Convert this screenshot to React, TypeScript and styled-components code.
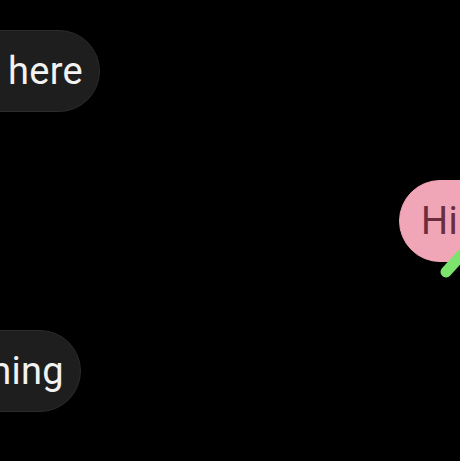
import React from "react";
import styled, { createGlobalStyle } from "styled-components";

const Global = createGlobalStyle`
  html, body { margin: 0; padding: 0; background: #000; }
  body { font-family: Roboto, "Open Sans", sans-serif; }
`;

const Screen = styled.div`
  width: 460px;
  height: 461px;
  overflow: hidden;
  background: #000;
  display: flex;
  flex-direction: column;
  gap: 68px;
  padding-top: 30px;
  box-sizing: border-box;
`;

const LeftRow = styled.div<{ $edge: number }>`
  width: ${(p) => p.$edge}px;
  display: flex;
  justify-content: flex-end;
`;

const RightRow = styled.div<{ $start: number }>`
  position: relative;
  display: flex;
  padding-left: ${(p) => p.$start}px;
`;

const Bubble = styled.div<{ $mine?: boolean }>`
  flex-shrink: 0;
  height: 82px;
  box-sizing: border-box;
  border-radius: 41px;
  display: flex;
  align-items: center;
  white-space: nowrap;
  font-size: 38px;
  letter-spacing: 0.3px;
  word-spacing: 12px;
  padding: ${(p) => (p.$mine ? "0 30px 1px 21px" : "0 16px 1px 30px")};
  background: ${(p) => (p.$mine ? "#f1a6b7" : "#1e1e1e")};
  color: ${(p) => (p.$mine ? "#6b2d3e" : "#f2f2f2")};
  border: 1px solid ${(p) => (p.$mine ? "#f1a6b7" : "#2b2b2b")};
`;

const Stroke = styled.svg`
  position: absolute;
  left: 436px;
  top: 64px;
  width: 30px;
  height: 36px;
  overflow: visible;
`;

export default function App() {
  return (
    <>
      <Global />
      <Screen>
        <LeftRow $edge={100}>
          <Bubble>Right here</Bubble>
        </LeftRow>
        <RightRow $start={399}>
          <Bubble $mine>Hi there</Bubble>
          <Stroke viewBox="0 0 30 36">
            <line x1="10" y1="28" x2="32" y2="4" stroke="#7ce36c" strokeWidth="11" strokeLinecap="round" />
          </Stroke>
        </RightRow>
        <LeftRow $edge={81}>
          <Bubble>Nothing</Bubble>
        </LeftRow>
      </Screen>
    </>
  );
}
